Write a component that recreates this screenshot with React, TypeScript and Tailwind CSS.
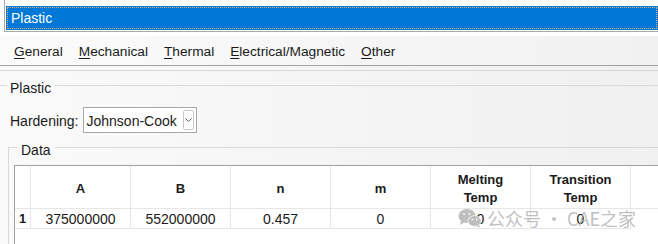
import React from 'react';

const tabs = [
  { key: 'G', rest: 'eneral' },
  { key: 'M', rest: 'echanical' },
  { key: 'T', rest: 'hermal' },
  { key: 'E', rest: 'lectrical/Magnetic' },
  { key: 'O', rest: 'ther' },
];

const columns = [
  { label: ['A'], value: '375000000' },
  { label: ['B'], value: '552000000' },
  { label: ['n'], value: '0.457' },
  { label: ['m'], value: '0' },
  { label: ['Melting', 'Temp'], value: '0' },
  { label: ['Transition', 'Temp'], value: '0' },
];

const WeChatIcon = () => (
  <svg width="24" height="20" viewBox="0 0 24 20" fill="currentColor">
    <ellipse cx="9" cy="8" rx="8.5" ry="7" />
    <path d="M3 13 L2 17 L7 14 Z" />
    <ellipse cx="16.5" cy="13" rx="7" ry="5.8" fill="#f6f6f6" />
    <ellipse cx="16.5" cy="13" rx="6.2" ry="5.1" />
    <path d="M21 17 L22.5 19.5 L18 18 Z" />
    <circle cx="6" cy="6" r="1.1" fill="#f6f6f6" />
    <circle cx="11.5" cy="6" r="1.1" fill="#f6f6f6" />
    <circle cx="14.3" cy="11.5" r="0.9" fill="#f6f6f6" />
    <circle cx="18.7" cy="11.5" r="0.9" fill="#f6f6f6" />
  </svg>
);

export default function App() {
  return (
    <div
      className="relative w-[658px] h-[244px] overflow-hidden bg-white text-[14px] text-[#1a1a1a]"
      style={{ fontFamily: '"Liberation Sans", Arial, sans-serif' }}
    >
      {/* list with selected item */}
      <div className="h-[32px] ml-[4px] border-l border-b border-[#a8a8a8] pt-[6px] pl-[1px]">
        <div className="h-[24px] bg-[#0078d7] text-white flex items-center pl-[5px] outline-1 outline-dotted outline-[#e0b070] -outline-offset-2">
          Plastic
        </div>
      </div>

      <div className="h-[4px] bg-white" />

      {/* tabs */}
      <div className="h-[30px] bg-gradient-to-r from-[#fbfbfb] to-[#f1f1f1] border-b border-[#a0a0a0] flex items-center pl-[14px] gap-[16px] pt-[3px] text-[13.7px]">
        {tabs.map(t => (
          <span key={t.key}>
            <u className="underline-offset-2">{t.key}</u>
            {t.rest}
          </span>
        ))}
      </div>

      <div className="h-[178px] bg-gradient-to-r from-[#fafafa] to-[#f0f0f0]">
        <div className="h-[5px] border-b border-[#d9d9d9]" />

        {/* Plastic group */}
        <div className="relative mt-[14px] border-t border-[#d9d9d9]">
          <span className="absolute left-[7px] -top-[7px] px-[3px] bg-[#fafafa] leading-[18px]">Plastic</span>
        </div>

        <div className="flex items-center mt-[21px] pl-[10px] gap-[4px]">
          <span className="pt-[2px]">Hardening:</span>
          <div className="w-[114px] h-[26px] border border-[#a8a8a8] bg-white flex items-center justify-between pl-[3px] pr-[2px]">
            <span className="pt-[2px]">Johnson-Cook</span>
            <div className="w-[11px] h-[20px] border border-[#c8c8c8] rounded-[2px] flex items-center justify-center">
              <svg width="7" height="4" viewBox="0 0 7 4" fill="none" stroke="#606060" strokeWidth="1">
                <path d="M0.5 0.5 L3.5 3.5 L6.5 0.5" />
              </svg>
            </div>
          </div>
        </div>

        {/* Data group */}
        <div className="relative mt-[14px] ml-[8px] h-[100px] border-l border-t border-[#d9d9d9] pt-[17px] pl-[5px]">
          <span className="absolute left-[8px] -top-[7px] px-[4px] bg-[#fafafa] leading-[18px]">Data</span>

          <div className="h-[90px] bg-white border-l border-t border-[#a0a0a0]">
            <div className="flex h-[43px] border-b border-[#e6e6e6] font-bold text-[13px]">
              <div className="w-[16px] border-r border-[#e6e6e6]" />
              {columns.map(c => (
                <div
                  key={c.label.join()}
                  className="w-[100px] border-r border-[#e6e6e6] flex flex-col items-center justify-center leading-[18px] pt-[3px]"
                >
                  {c.label.map(l => (
                    <span key={l}>{l}</span>
                  ))}
                </div>
              ))}
            </div>
            <div className="flex h-[20px]">
              <div className="w-[16px] border-r border-b border-[#e6e6e6] flex items-center justify-center font-bold text-[13px] pt-[1px]">
                1
              </div>
              {columns.map(c => (
                <div
                  key={c.label.join()}
                  className="w-[100px] border-r border-b border-[#e6e6e6] flex items-center justify-center pt-[1px]"
                >
                  {c.value}
                </div>
              ))}
            </div>
          </div>
        </div>
      </div>

      {/* watermark */}
      <div className="absolute left-[458px] top-[206px] flex items-center gap-[5px] whitespace-nowrap text-[#b4b4b4]/85 pointer-events-none">
        <WeChatIcon />
        <span
          className="text-[18px] leading-[24px]"
          style={{ fontFamily: '"Noto Sans CJK SC", "Noto Sans", sans-serif' }}
        >
          公众号 · CAE之家
        </span>
      </div>
    </div>
  );
}
